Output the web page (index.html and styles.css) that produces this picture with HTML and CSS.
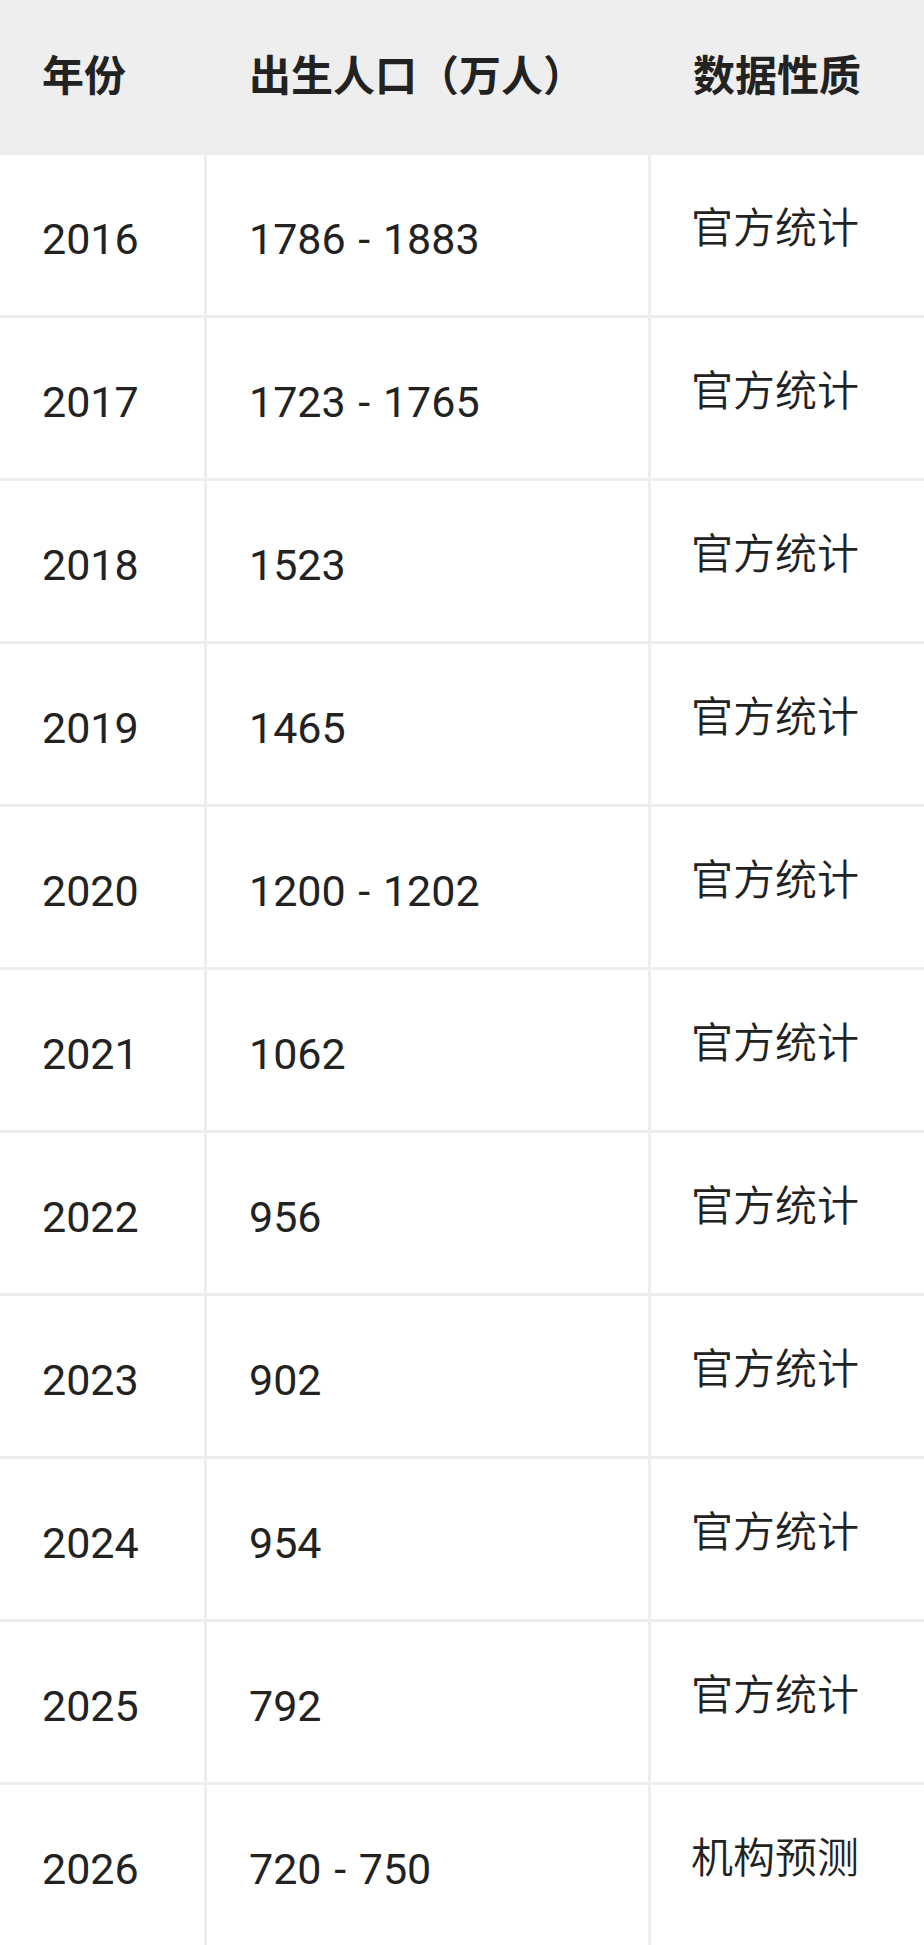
FILE: index.html
```html
<!DOCTYPE html>
<html lang="zh-CN">
<head>
  <meta charset="UTF-8">
  <meta name="viewport" content="width=device-width, initial-scale=1.0">
  <title>出生人口</title>
  <link rel="stylesheet" href="styles.css">
</head>
<body>

<table class="births">
  <colgroup>
    <col class="col-year">
    <col class="col-num">
    <col class="col-kind">
  </colgroup>
  <thead>
    <tr>
      <th>年份</th>
      <th>出生人口（万人）</th>
      <th>数据性质</th>
    </tr>
  </thead>
  <tbody>
    <tr><td>2016</td><td>1786 - 1883</td><td class="kind">官方统计</td></tr>
    <tr><td>2017</td><td>1723 - 1765</td><td class="kind">官方统计</td></tr>
    <tr><td>2018</td><td>1523</td><td class="kind">官方统计</td></tr>
    <tr><td>2019</td><td>1465</td><td class="kind">官方统计</td></tr>
    <tr><td>2020</td><td>1200 - 1202</td><td class="kind">官方统计</td></tr>
    <tr><td>2021</td><td>1062</td><td class="kind">官方统计</td></tr>
    <tr><td>2022</td><td>956</td><td class="kind">官方统计</td></tr>
    <tr><td>2023</td><td>902</td><td class="kind">官方统计</td></tr>
    <tr><td>2024</td><td>954</td><td class="kind">官方统计</td></tr>
    <tr><td>2025</td><td>792</td><td class="kind">官方统计</td></tr>
    <tr><td>2026</td><td>720 - 750</td><td class="kind">机构预测</td></tr>
  </tbody>
</table>

</body>
</html>
```

FILE: styles.css
```css
body {
    margin: 0;
    padding: 0;
    background: #fff;
    color: #222;
    font-family: Roboto, "Noto Sans CJK SC", sans-serif;
}
.births {
    width: 924px;
    table-layout: fixed;
    border-collapse: separate;
    border-spacing: 0;
    line-height: 1.4;
}
.col-year { width: 207px; }
.col-num { width: 444px; }
.col-kind { width: 273px; }
.births th,
.births td {
    box-sizing: border-box;
    padding: 0 0 0 42px;
    text-align: left;
    vertical-align: middle;
    white-space: nowrap;
}
.births th {
    height: 155px;
    background: #eeeeee;
    font-size: 42px;
    font-weight: 700;
}
.births td {
    height: 163px;
    padding-top: 8px;
    font-size: 43px;
    font-weight: 400;
    word-spacing: 2px;
    border-bottom: 3px solid #eeeeee;
}
.births td:not(:last-child) {
    border-right: 3px solid #eeeeee;
}
.births tbody tr:last-child td {
    height: 160px;
    border-bottom: none;
}
.births td.kind {
    padding: 0 0 12px 40px;
    font-size: 42px;
    font-weight: 350;
}
```
